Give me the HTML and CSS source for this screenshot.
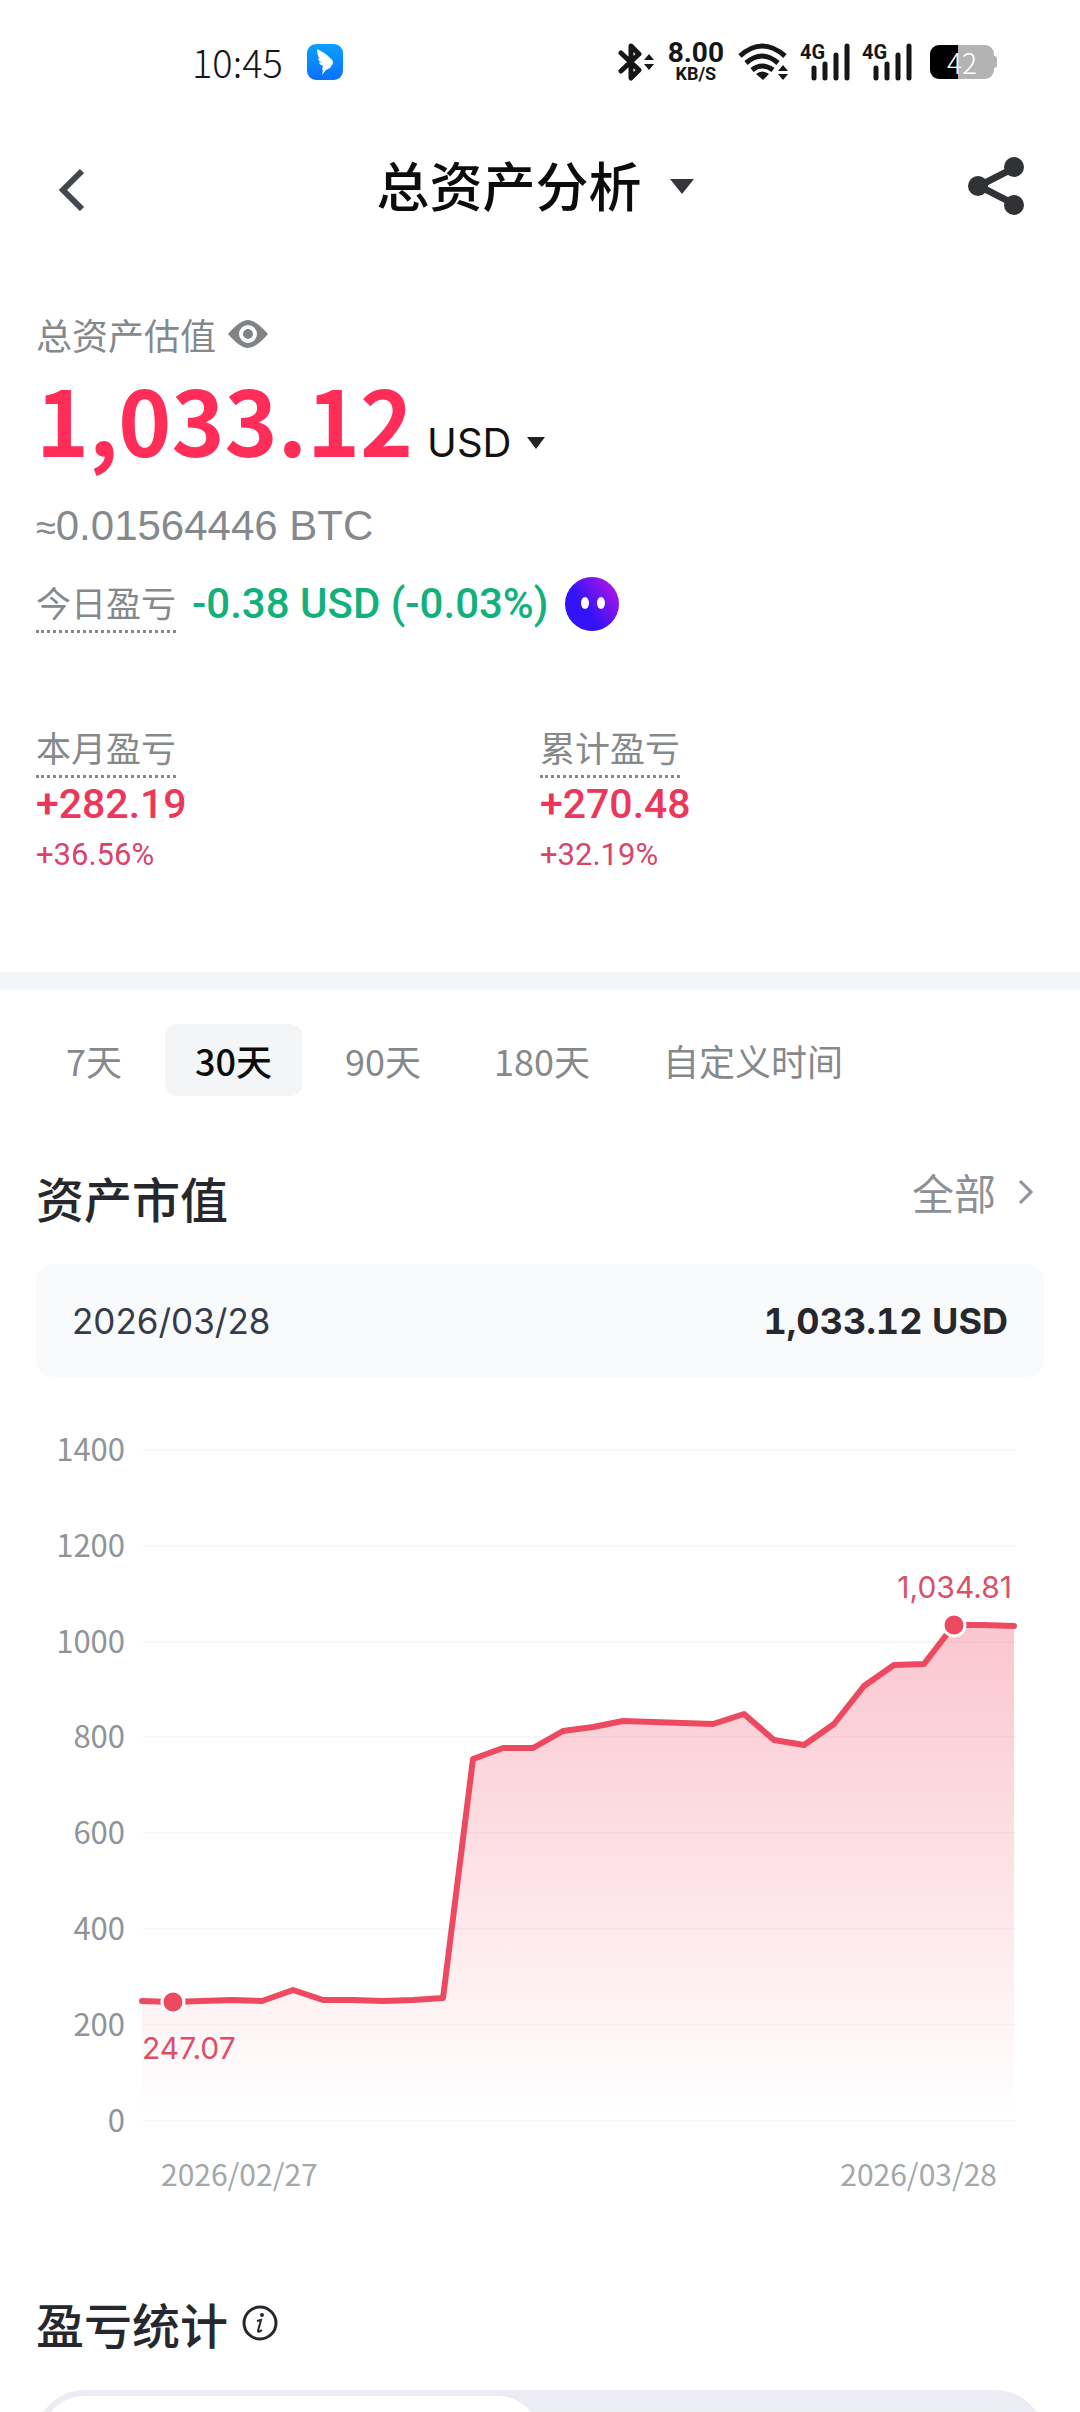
FILE: index.html
```html
<!DOCTYPE html>
<html lang="zh-CN">
<head>
<meta charset="utf-8">
<meta name="viewport" content="width=device-width, initial-scale=1">
<title>总资产分析</title>
<link rel="stylesheet" href="styles.css">
</head>
<body>
<div class="screen">
  <div class="status">
    <div class="status-left">
      <span class="clock">10:45</span>
      <svg width="36" height="36" viewBox="0 0 36 36" aria-hidden="true">
        <defs><linearGradient id="ding" x1="0" y1="0" x2="0" y2="1"><stop offset="0" stop-color="#0aa0ff"/><stop offset="1" stop-color="#0a70ff"/></linearGradient></defs>
        <rect width="36" height="36" rx="9" fill="url(#ding)"/>
        <path d="M10 5c5 3 10 5 12 8 2 2 4 3 4 5s-1 3-3 6l-4 2-4 5 1-5h-1l1-4c-2-1-4-2-4-4l3 1c-2-1-4-3-4-5l2 1c-2-2-3-6-3-10z" fill="#fff"/>
      </svg>
    </div>
    <div class="status-right">
      <svg width="36" height="38" viewBox="0 0 36 38" aria-hidden="true">
        <path d="M3 10l18 17-8 8V3l8 8L3 28" fill="none" stroke="#161616" stroke-width="5" stroke-linejoin="round" stroke-linecap="round"/>
        <path d="M26 17l5-6 5 6zM26 21l5 6 5-6z" fill="#161616"/>
      </svg>
      <span class="speed"><b>8.00</b><small>KB/S</small></span>
      <svg width="50" height="38" viewBox="0 0 50 38" aria-hidden="true">
        <g fill="none" stroke="#161616" stroke-width="5"><path d="M2 13Q24 -7 47 13"/><path d="M8 20Q24 6 40 20"/><path d="M14 27Q24 19 35 27"/></g>
        <path d="M18 31q6-5 13 0l-6 6z" fill="#161616"/>
        <path d="M40 28l5-6 5 6zM40 31l5 6 5-6z" fill="#161616"/>
      </svg>
      <span class="cell"><i>4G</i>
        <svg width="48" height="38" viewBox="0 0 48 38" aria-hidden="true"><path d="M12 25v10M23 21v14M34 12v23M45 3v32" stroke="#161616" stroke-width="5" stroke-linecap="round"/></svg>
      </span>
      <span class="cell"><i>4G</i>
        <svg width="48" height="38" viewBox="0 0 48 38" aria-hidden="true"><path d="M12 25v10M23 21v14M34 12v23M45 3v32" stroke="#161616" stroke-width="5" stroke-linecap="round"/></svg>
      </span>
      <span class="battery">42</span>
    </div>
  </div>

  <header class="topbar">
    <button class="icon-btn" aria-label="返回">
      <svg width="44" height="50" viewBox="0 0 44 50"><path d="M36 10L17 29 36 48" fill="none" stroke="#44474c" stroke-width="6"/></svg>
    </button>
    <button class="title"><span>总资产分析</span><svg width="24" height="20" viewBox="0 0 24 20"><path d="M0 5h24L12 20z" fill="#333539"/></svg></button>
    <button class="icon-btn end" aria-label="分享">
      <svg width="56" height="58" viewBox="0 0 56 58"><path d="M46 11L11 29l35 18" fill="none" stroke="#303236" stroke-width="7"/><g fill="#303236"><circle cx="46" cy="10" r="10"/><circle cx="10" cy="29" r="10"/><circle cx="46" cy="48" r="10"/></g></svg>
    </button>
  </header>

  <section class="summary">
    <div class="est"><span>总资产估值</span>
      <button class="icon-btn" aria-label="隐藏金额"><svg width="40" height="28" viewBox="0 0 40 28"><path fill-rule="evenodd" d="M0 14Q12 0 20 0T40 14Q28 28 20 28T0 14zM20 5a9 9 0 1 0 0 18 9 9 0 0 0 0-18zm0 4a5 5 0 1 1 0 10 5 5 0 0 1 0-10z" fill="#808487"/></svg></button>
    </div>
    <div class="total"><strong>1,033.12</strong><button class="unit">USD<svg width="18" height="12" viewBox="0 0 18 12"><path d="M0 0h18L9 12z" fill="#222"/></svg></button></div>
    <div class="btc"><span class="approx">≈</span>0.01564446 BTC</div>
    <div class="today"><span class="dotted">今日盈亏</span><b>-0.38 USD (-0.03%)</b>
      <svg width="56" height="56" viewBox="0 0 56 56" aria-hidden="true">
        <defs><linearGradient id="bot" x1="0.100" y1="0.800" x2="0.900" y2="0.200"><stop offset="0.350" stop-color="#3413f8"/><stop offset="1" stop-color="#a515e8"/></linearGradient></defs>
        <circle cx="28" cy="28" r="27" fill="url(#bot)"/><ellipse cx="21" cy="27" rx="4" ry="6" fill="#fff"/><ellipse cx="37" cy="27" rx="4" ry="6" fill="#fff"/>
      </svg>
    </div>
    <dl class="stats">
      <div><dt><span class="dotted">本月盈亏</span></dt><dd class="amount">+282.19</dd><dd class="rate">+36.56%</dd></div>
      <div><dt><span class="dotted">累计盈亏</span></dt><dd class="amount">+270.48</dd><dd class="rate">+32.19%</dd></div>
    </dl>
  </section>

  <nav class="ranges" aria-label="时间范围">
    <button>7天</button><button class="on">30天</button><button>90天</button><button>180天</button><button>自定义时间</button>
  </nav>

  <section>
    <div class="section-head"><h2>资产市值</h2><a href="#all">全部<svg width="16" height="26" viewBox="0 0 16 26"><path d="M2 2l11 11L2 24" fill="none" stroke="#8b9196" stroke-width="3"/></svg></a></div>
    <div class="readout"><span>2026/03/28</span><b>1,033.12 USD</b></div>
    <svg class="chart" viewBox="0 0 1080 830" role="img" aria-label="资产市值">
      <defs><linearGradient id="area" gradientUnits="userSpaceOnUse" x1="0" y1="245" x2="0" y2="735"><stop offset="0" stop-color="#f0405c" stop-opacity="0.300"/><stop offset="1" stop-color="#f0405c" stop-opacity="0"/></linearGradient></defs>
      <path d="M143 70H1016M143 166H1016M143 262H1016M143 357H1016M143 453H1016M143 549H1016M143 645H1016M143 741H1016" stroke="#f6f7f8" stroke-width="2"/>
      <path d="M142 621L172 622 202 621 232 620 262 621 293 610 323 620 353 620 383 621 413 620 443 618 473 379 503 368 533 368 563 351 593 347 623 341 653 342 683 343 713 344 744 334 774 360 804 365 834 344 864 306 894 285 924 284 954 245 984 245 1014 246V741H142z" fill="url(#area)"/>
      <path d="M142 621L172 622 202 621 232 620 262 621 293 610 323 620 353 620 383 621 413 620 443 618 473 379 503 368 533 368 563 351 593 347 623 341 653 342 683 343 713 344 744 334 774 360 804 365 834 344 864 306 894 285 924 284 954 245 984 245 1014 246" fill="none" stroke="#ed4a61" stroke-width="6" stroke-linejoin="round" stroke-linecap="round"/>
      <g fill="#ed4a61" stroke="#fff" stroke-width="3"><circle cx="173" cy="622" r="11"/><circle cx="954" cy="245" r="11"/></g>
      <g class="axis" text-anchor="end"><text x="125" y="81">1400</text><text x="125" y="177">1200</text><text x="125" y="273">1000</text><text x="125" y="368">800</text><text x="125" y="464">600</text><text x="125" y="560">400</text><text x="125" y="656">200</text><text x="125" y="752">0</text></g>
      <g class="axis dates"><text x="161" y="806">2026/02/27</text><text x="997" y="806" text-anchor="end">2026/03/28</text></g>
      <g class="marks"><text x="142" y="679">247.07</text><text x="1012" y="218" text-anchor="end">1,034.81</text></g>
    </svg>
  </section>

  <section class="pnl">
    <div class="section-head start"><h2>盈亏统计</h2>
      <button class="icon-btn" aria-label="说明"><svg width="36" height="36" viewBox="0 0 36 36"><circle cx="18" cy="18" r="16" fill="none" stroke="#26282d" stroke-width="3"/><circle cx="20" cy="10" r="2" fill="#26282d"/><path d="M15 16l4-1-3 11q0 2 4-1" fill="none" stroke="#26282d" stroke-width="2"/></svg></button>
    </div>
    <div class="segmented"><button class="on" aria-label="盈亏"></button><button aria-label="收益率"></button></div>
  </section>
</div>
</body>
</html>
```
FILE: styles.css
```css
* { box-sizing: border-box; }

body {
  margin: 0;
  background: #fff;
  color: #26282d;
  font-family: "Noto Sans CJK SC", sans-serif;
}

button {
  padding: 0;
  border: 0;
  background: none;
  color: inherit;
  font: inherit;
}

svg { display: block; flex: none; }
h2, dl, dd { margin: 0; }

.screen {
  height: 100vh;
  overflow: hidden;
}

/* Phone status bar */
.status {
  display: flex;
  justify-content: space-between;
  align-items: center;
  height: 124px;
  padding: 0 86px 0 192px;
  color: #161616;
}
.status-left { display: flex; align-items: center; gap: 24px; }
.clock { font-size: 38px; font-weight: 300; line-height: 40px; }
.status-right { display: flex; align-items: center; gap: 14px; }
.speed {
  display: flex;
  flex-direction: column;
  align-items: center;
  font-family: Roboto, sans-serif;
}
.speed b { font-size: 28px; font-weight: 700; line-height: 24px; }
.speed small { font-size: 18px; font-weight: 700; line-height: 18px; }
.cell { position: relative; }
.cell i {
  position: absolute;
  top: 0;
  left: -2px;
  font: 700 20px/18px Roboto, sans-serif;
}
.battery {
  position: relative;
  width: 64px;
  height: 34px;
  margin-left: 4px;
  border-radius: 9px;
  background: linear-gradient(90deg, #000 44%, #b3b3b3 44%);
  color: #fff;
  font-size: 28px;
  font-weight: 300;
  line-height: 34px;
  text-align: center;
}
.battery::after {
  content: "";
  position: absolute;
  top: 11px;
  left: 100%;
  width: 3px;
  height: 12px;
  border-radius: 0 3px 3px 0;
  background: #b3b3b3;
}

/* Title bar */
.topbar {
  display: grid;
  grid-template-columns: 1fr auto 1fr;
  align-items: center;
  height: 124px;
  padding: 0 56px 0 46px;
}
.title {
  display: flex;
  align-items: center;
  gap: 28px;
  padding-bottom: 4px;
  color: #0b0c0e;
  font-size: 53px;
  font-weight: 500;
  line-height: 72px;
}
.end { justify-self: end; }

/* Balance */
.summary {
  padding: 60px 36px 92px;
  border-bottom: 18px solid #f4f5f7;
  color: #85898c;
}
.est {
  display: flex;
  align-items: center;
  gap: 12px;
  font-size: 36px;
  line-height: 52px;
}
.total {
  display: flex;
  align-items: baseline;
  gap: 14px;
  line-height: 116px;
}
.total strong { color: #ff2d58; font-size: 90px; font-weight: 700; }
.unit {
  display: flex;
  align-items: center;
  gap: 16px;
  color: #111;
  font: 400 40px/48px Inter, sans-serif;
}
.btc {
  margin-top: 20px;
  font: 400 42px/60px "Liberation Sans", sans-serif;
}
.approx { font-size: 36px; }
.today {
  display: flex;
  align-items: center;
  gap: 16px;
  margin-top: 16px;
}
.today b {
  color: #12b17c;
  font: 500 42px/56px Roboto, sans-serif;
}
.dotted {
  display: inline-block;
  border-bottom: 3px dotted #85898c;
  font-size: 35px;
  line-height: 56px;
}
.stats {
  display: grid;
  grid-template-columns: 1fr 1fr;
  margin-top: 86px;
}
.amount {
  color: #ec365a;
  font: 500 41px/52px Roboto, sans-serif;
}
.rate {
  color: #d8446a;
  font: 400 31px/50px Roboto, sans-serif;
}

/* Range tabs */
.ranges {
  display: flex;
  gap: 13px;
  padding: 34px 36px 0;
}
.ranges button {
  padding: 0 30px;
  border-radius: 12px;
  color: #85898c;
  font-size: 36px;
  line-height: 72px;
}
.ranges .on { background: #f4f5f7; color: #0b0c0e; font-weight: 500; }

/* Sections */
.section-head {
  display: flex;
  justify-content: space-between;
  align-items: flex-start;
  padding: 65px 46px 31px 36px;
}
.section-head.start { justify-content: flex-start; align-items: center; gap: 14px; }
.section-head h2 { font-size: 48px; font-weight: 500; line-height: 72px; }
.section-head a {
  display: flex;
  align-items: center;
  gap: 22px;
  color: #8b9196;
  font-size: 42px;
  line-height: 62px;
  text-decoration: none;
}
.readout {
  display: flex;
  justify-content: space-between;
  align-items: center;
  height: 113px;
  margin: 0 36px;
  padding: 0 36px;
  border-radius: 18px;
  background: #f8fafc;
  font: 400 35px/48px Inter, sans-serif;
}
.readout span { color: #363b4c; }
.readout b { font-size: 36px; font-weight: 700; font-variant-numeric: tabular-nums; }

.chart { width: 100%; height: auto; margin-top: 3px; }
.axis { fill: #909498; font-size: 31px; }
.dates { fill: #a3a7aa; font-size: 30px; }
.marks { fill: #db4f68; font-family: Inter, sans-serif; font-size: 30px; }

.pnl { padding-top: 12px; }
.segmented {
  display: flex;
  height: 96px;
  margin: 0 36px;
  padding: 6px;
  border-radius: 48px;
  background: #ecedf4;
}
.segmented button { flex: 1; border-radius: 42px; }
.segmented .on { background: #fff; }
```
